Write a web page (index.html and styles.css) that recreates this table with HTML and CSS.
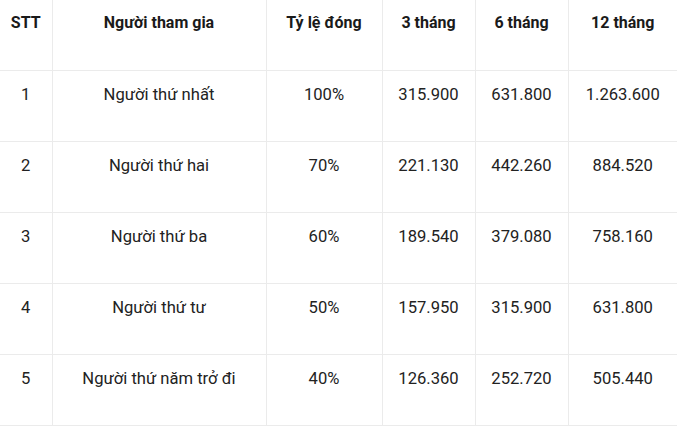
FILE: index.html
```html
<!DOCTYPE html>
<html lang="vi">
<head>
<meta charset="utf-8">
<link rel="stylesheet" href="styles.css">
</head>
<body>
<table class="fee-table">
  <colgroup>
    <col class="c-stt">
    <col class="c-name">
    <col class="c-rate">
    <col class="c-m3">
    <col class="c-m6">
    <col class="c-m12">
  </colgroup>
  <thead>
    <tr>
      <th>STT</th>
      <th>Người tham gia</th>
      <th>Tỷ lệ đóng</th>
      <th>3 tháng</th>
      <th>6 tháng</th>
      <th>12 tháng</th>
    </tr>
  </thead>
  <tbody>
    <tr><td>1</td><td>Người thứ nhất</td><td>100%</td><td>315.900</td><td>631.800</td><td>1.263.600</td></tr>
    <tr><td>2</td><td>Người thứ hai</td><td>70%</td><td>221.130</td><td>442.260</td><td>884.520</td></tr>
    <tr><td>3</td><td>Người thứ ba</td><td>60%</td><td>189.540</td><td>379.080</td><td>758.160</td></tr>
    <tr><td>4</td><td>Người thứ tư</td><td>50%</td><td>157.950</td><td>315.900</td><td>631.800</td></tr>
    <tr><td>5</td><td>Người thứ năm trở đi</td><td>40%</td><td>126.360</td><td>252.720</td><td>505.440</td></tr>
  </tbody>
</table>
</body>
</html>
```
FILE: styles.css
```css
html, body {
  margin: 0;
  padding: 0;
  background: #ffffff;
}
body {
  font-family: Roboto, "Liberation Sans", sans-serif;
  color: #222222;
}
.fee-table {
  width: 677px;
  table-layout: fixed;
  border-collapse: collapse;
}
.c-stt { width: 52px; }
.c-name { width: 214px; }
.c-rate { width: 116px; }
.c-m3 { width: 93px; }
.c-m6 { width: 93px; }
.c-m12 { width: 109px; }

.fee-table th,
.fee-table td {
  text-align: center;
  vertical-align: top;
  border-left: 1px solid #ebebeb;
  border-bottom: 1px solid #ebebeb;
  padding: 0;
  box-sizing: border-box;
}
.fee-table th:first-child,
.fee-table td:first-child {
  border-left: none;
}
.fee-table th {
  font-size: 16px;
  line-height: 19px;
  font-weight: 700;
  height: 70px;
  padding-top: 13px;
  color: #1a1a1a;
}
.fee-table td {
  font-size: 16.6px;
  line-height: 20px;
  height: 71px;
  padding-top: 14px;
}
```
